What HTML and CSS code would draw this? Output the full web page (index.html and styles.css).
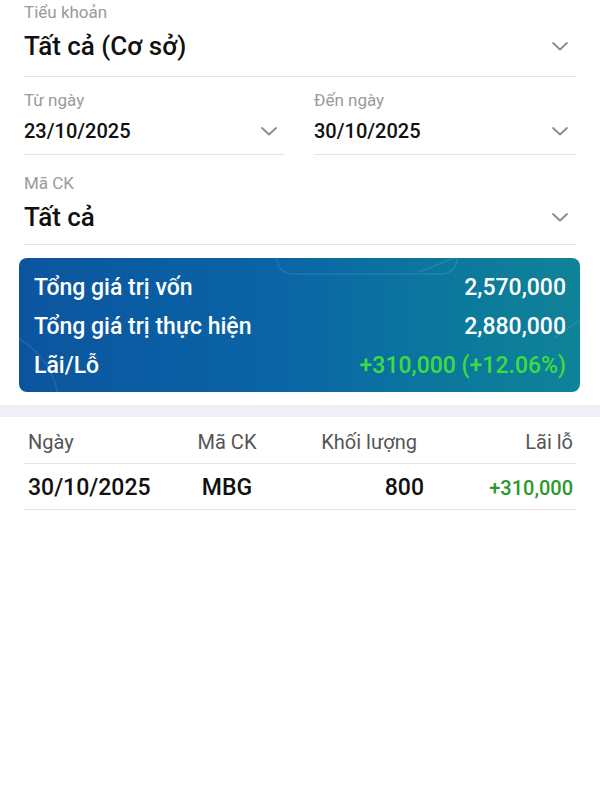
FILE: index.html
```html
<!DOCTYPE html>
<html lang="vi">
<head>
    <meta charset="UTF-8">
    <meta name="viewport" content="width=device-width, initial-scale=1.0">
    <title>Lãi lỗ đã thực hiện</title>
    <link rel="stylesheet" href="styles.css">
</head>
<body>

    <!-- Filters -->
    <div class="filters">
        <div class="field field-account">
            <span class="label">Tiểu khoản</span>
            <div class="value-row">
                <span class="value big">Tất cả (Cơ sở)</span>
                <svg class="chevron" viewBox="0 0 16 9"><path d="M1 1l7 6.5L15 1"/></svg>
            </div>
        </div>

        <div class="date-row">
            <div class="field field-date">
                <span class="label">Từ ngày</span>
                <div class="value-row">
                    <span class="value">23/10/2025</span>
                    <svg class="chevron" viewBox="0 0 16 9"><path d="M1 1l7 6.5L15 1"/></svg>
                </div>
            </div>
            <div class="field field-date">
                <span class="label">Đến ngày</span>
                <div class="value-row">
                    <span class="value">30/10/2025</span>
                    <svg class="chevron" viewBox="0 0 16 9"><path d="M1 1l7 6.5L15 1"/></svg>
                </div>
            </div>
        </div>

        <div class="field field-symbol">
            <span class="label">Mã CK</span>
            <div class="value-row">
                <span class="value big">Tất cả</span>
                <svg class="chevron" viewBox="0 0 16 9"><path d="M1 1l7 6.5L15 1"/></svg>
            </div>
        </div>
    </div>

    <!-- Summary card -->
    <div class="summary">
        <svg class="summary-deco" viewBox="0 0 561 134" preserveAspectRatio="none">
            <circle cx="-40" cy="150" r="80"/>
            <rect x="258" y="-14" width="180" height="30" rx="15"/>
            <path d="M400 14 L440 -2"/>
            <path d="M535 80 L561 62"/>
        </svg>
        <div class="summary-row">
            <span>Tổng giá trị vốn</span>
            <span>2,570,000</span>
        </div>
        <div class="summary-row">
            <span>Tổng giá trị thực hiện</span>
            <span>2,880,000</span>
        </div>
        <div class="summary-row">
            <span>Lãi/Lỗ</span>
            <span class="up">+310,000 (+12.06%)</span>
        </div>
    </div>

    <div class="band"></div>

    <!-- Table -->
    <div class="table">
        <div class="table-row table-head">
            <span>Ngày</span>
            <span class="center">Mã CK</span>
            <span class="right vol-head">Khối lượng</span>
            <span class="right">Lãi lỗ</span>
        </div>
        <div class="table-row table-body">
            <span>30/10/2025</span>
            <span class="center">MBG</span>
            <span class="right">800</span>
            <span class="right pnl">+310,000</span>
        </div>
    </div>

</body>
</html>
```

FILE: styles.css
```css
* {
    margin: 0;
    padding: 0;
    box-sizing: border-box;
}

body {
    font-family: Roboto, 'Noto Sans', sans-serif;
    background: #ffffff;
    color: #111;
    width: 600px;
}

.filters {
    padding: 0 24px;
}

.field {
    border-bottom: 1.5px solid #e4e4e4;
}

.label {
    display: block;
    font-size: 17px;
    line-height: 20px;
    color: #9a9a9a;
}

.value-row {
    display: flex;
    justify-content: space-between;
    align-items: center;
}

.value {
    font-size: 20px;
    line-height: 26px;
    font-weight: 500;
}

.value.big {
    font-size: 26px;
    line-height: 32px;
}

.chevron {
    width: 16px;
    height: 9px;
    margin-right: 8px;
    fill: none;
    stroke: #8a8a8a;
    stroke-width: 1.8;
    stroke-linecap: round;
    stroke-linejoin: round;
}

.field-account {
    padding-top: 2px;
    padding-bottom: 14px;
}

.field-account .value-row,
.field-symbol .value-row {
    margin-top: 8px;
}

.date-row {
    display: grid;
    grid-template-columns: 261px 262px;
    column-gap: 29px;
    margin-top: 13px;
}

.field-date {
    padding-bottom: 10px;
}

.field-date .value-row {
    margin-top: 8px;
}

.field-symbol {
    margin-top: 18px;
    padding-bottom: 11px;
}

/* summary card */
.summary {
    position: relative;
    overflow: hidden;
    margin: 13px 20px 0 19px;
    height: 134px;
    padding: 10px 14px 7px 15px;
    border-radius: 8px;
    background: linear-gradient(90deg, #0b559f 0%, #0a64a6 45%, #0c7a9c 80%, #0f8398 100%);
    color: #fff;
}

.summary-deco {
    position: absolute;
    left: 0;
    top: 0;
    width: 100%;
    height: 100%;
    fill: none;
    stroke: rgba(255, 255, 255, 0.1);
    stroke-width: 1.5;
    pointer-events: none;
}

.summary-row {
    position: relative;
    display: flex;
    justify-content: space-between;
    font-size: 23px;
    line-height: 39px;
    font-weight: 500;
}

.summary-row .up {
    color: #3ddc3f;
}

.band {
    height: 12px;
    margin-top: 13px;
    background: #eff0f5;
}

/* table */
.table {
    margin: 13px 24px 0;
}

.table-row {
    display: grid;
    grid-template-columns: 142px 114px 140px 1fr;
    padding: 0 3px 0 4px;
    border-bottom: 1.5px solid #e4e4e4;
}

.table-head {
    font-size: 20px;
    line-height: 24px;
    color: #555;
    padding-bottom: 9px;
}

.table-body {
    font-size: 23px;
    line-height: 30px;
    font-weight: 500;
    padding-top: 9px;
    padding-bottom: 6px;
}

.center {
    text-align: center;
}

.right {
    text-align: right;
}

.vol-head {
    padding-right: 7px;
}

.pnl {
    font-size: 20px;
    color: #2a982a;
    align-self: center;
}
```
